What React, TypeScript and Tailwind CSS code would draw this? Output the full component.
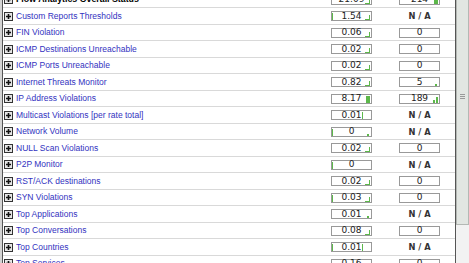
import React from 'react';

type Mark = 'L' | 'bar' | 'bars' | 'left' | 'mid' | 'dot';

type Row = {
  label: string;
  v1: string;
  m1: Mark[];
  v2: string | null;
  m2: Mark[];
  head?: boolean;
};

const rows: Row[] = [
  { label: 'Flow Analytics Overall Status', v1: '21.09', m1: ['L'], v2: '214', m2: ['bar'], head: true },
  { label: 'Custom Reports Thresholds', v1: '1.54', m1: ['left', 'L'], v2: null, m2: [] },
  { label: 'FIN Violation', v1: '0.06', m1: ['L'], v2: '0', m2: [] },
  { label: 'ICMP Destinations Unreachable', v1: '0.02', m1: ['L'], v2: '0', m2: [] },
  { label: 'ICMP Ports Unreachable', v1: '0.02', m1: ['L'], v2: '0', m2: [] },
  { label: 'Internet Threats Monitor', v1: '0.82', m1: ['L'], v2: '5', m2: ['dot'] },
  { label: 'IP Address Violations', v1: '8.17', m1: ['bar'], v2: '189', m2: ['bars'] },
  { label: 'Multicast Violations [per rate total]', v1: '0.01', m1: ['mid'], v2: null, m2: [] },
  { label: 'Network Volume', v1: '0', m1: ['left', 'dot'], v2: null, m2: [] },
  { label: 'NULL Scan Violations', v1: '0.02', m1: ['L'], v2: '0', m2: [] },
  { label: 'P2P Monitor', v1: '0', m1: ['left'], v2: null, m2: [] },
  { label: 'RST/ACK destinations', v1: '0.02', m1: ['L'], v2: '0', m2: [] },
  { label: 'SYN Violations', v1: '0.03', m1: ['left', 'L'], v2: '0', m2: [] },
  { label: 'Top Applications', v1: '0.01', m1: ['dot'], v2: null, m2: [] },
  { label: 'Top Conversations', v1: '0.08', m1: ['L'], v2: '0', m2: [] },
  { label: 'Top Countries', v1: '0.01', m1: ['left', 'mid'], v2: null, m2: [] },
  { label: 'Top Services', v1: '0.16', m1: ['L'], v2: '0', m2: [] },
];

function PlusBox() {
  return (
    <svg width="9" height="9" viewBox="0 0 9 9" className="shrink-0">
      <rect x="0.5" y="0.5" width="8" height="8" fill="#e6e6e6" stroke="#333" />
      <path d="M4.5 2v5M2 4.5h5" stroke="#111" strokeWidth="1.6" />
    </svg>
  );
}

function Marks({ marks }: { marks: Mark[] }) {
  return (
    <>
      {marks.includes('left') && <span className="absolute left-0 top-[1px] bottom-0 w-px bg-[#5cb84a]" />}
      {marks.includes('L') && (
        <>
          <span className="absolute right-[1px] bottom-0 h-[5px] w-px bg-[#5cb84a]" />
          <span className="absolute right-[1px] bottom-0 h-px w-[5px] bg-[#5cb84a]" />
        </>
      )}
      {marks.includes('bar') && <span className="absolute right-[1px] bottom-0 h-[7px] w-[4px] bg-[#5cb84a]" />}
      {marks.includes('bars') && (
        <>
          <span className="absolute right-[1px] bottom-0 h-[6px] w-[2px] bg-[#5cb84a]" />
          <span className="absolute right-[4px] bottom-0 h-[3px] w-[2px] bg-[#5cb84a]" />
        </>
      )}
      {marks.includes('mid') && <span className="absolute right-[8px] top-[1px] bottom-0 w-px bg-[#5cb84a]" />}
      {marks.includes('dot') && <span className="absolute right-[2px] bottom-0 h-[2px] w-[2px] bg-[#5cb84a]" />}
    </>
  );
}

function ValueBox({ value, marks }: { value: string; marks: Mark[] }) {
  return (
    <div className="relative w-[41px] h-[10px] border border-[#999] bg-white flex items-center justify-center text-[9px] leading-none text-[#222] font-['DejaVu_Sans',sans-serif]">
      {value}
      <Marks marks={marks} />
    </div>
  );
}

export default function App() {
  return (
    <div className="w-[469px] h-[263px] overflow-hidden bg-white flex font-['Liberation_Sans',Arial,sans-serif]">
      <div className="w-[2px] bg-[#d4d4d4]" />
      <div className="flex-1 border-l border-r border-[#555] overflow-hidden">
        <div className="-mt-[8.5px]">
          {rows.map((r) => (
            <div key={r.label} className="h-[16.5px] border-b border-[#d9d9d9] flex items-center pl-[1px] pt-[1px]">
              <PlusBox />
              <span
                className={
                  r.head
                    ? 'ml-[3px] flex-1 text-[8.8px] font-bold text-black whitespace-nowrap'
                    : 'ml-[3px] flex-1 text-[8.5px] text-[#3232c0] whitespace-nowrap'
                }
              >
                {r.label}
              </span>
              <ValueBox value={r.v1} marks={r.m1} />
              <div className="ml-[27px] mr-[15px] w-[41px] flex justify-center">
                {r.v2 === null ? (
                  <span className="text-[8.3px] font-bold text-[#333] font-['DejaVu_Sans',sans-serif]">N / A</span>
                ) : (
                  <ValueBox value={r.v2} marks={r.m2} />
                )}
              </div>
            </div>
          ))}
        </div>
      </div>
      <div className="w-[13px] flex flex-col bg-[#eef0ee]">
        <div className="h-[225px] border-l border-r border-b border-[#b4b8b4] bg-[#e2e6e2] flex items-center justify-center">
          <div className="flex flex-col gap-[1px] mt-[-32px]">
            <span className="w-[5px] h-px bg-[#999]" />
            <span className="w-[5px] h-px bg-[#999]" />
            <span className="w-[5px] h-px bg-[#999]" />
          </div>
        </div>
        <div className="flex-1 bg-[#f2f2f2]" />
      </div>
    </div>
  );
}
